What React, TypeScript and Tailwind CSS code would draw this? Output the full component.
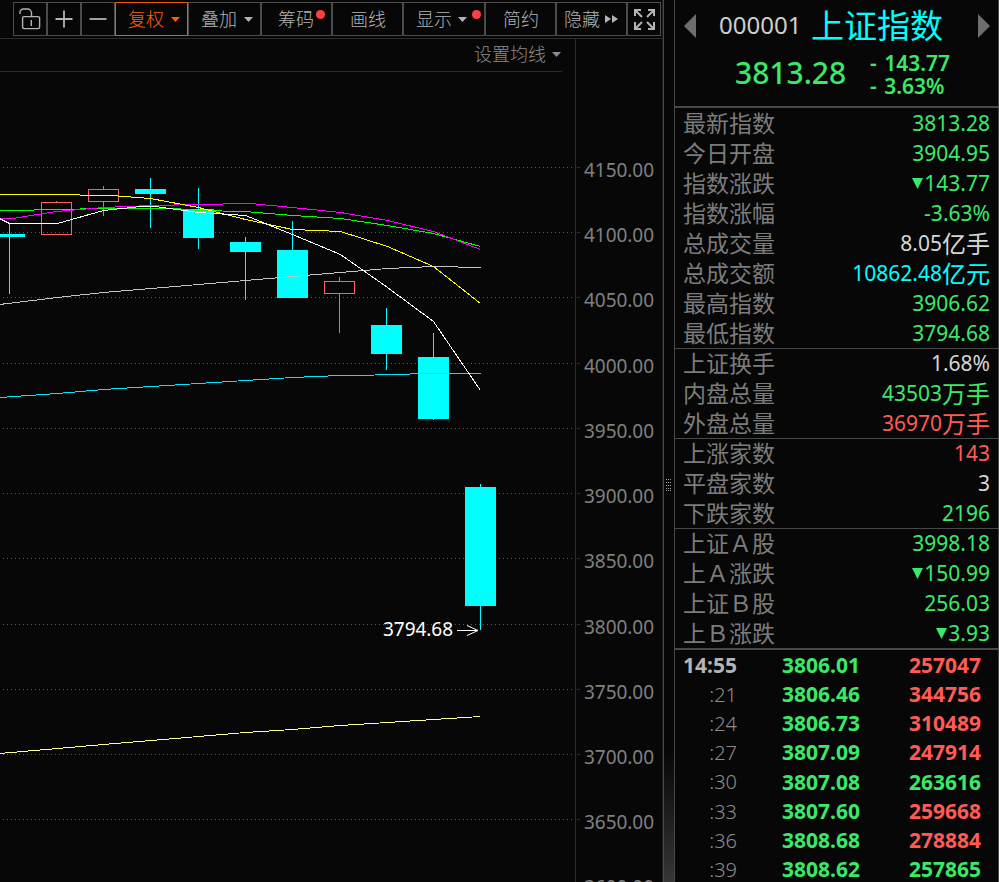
import type { ReactNode } from 'react';

const GREEN = 'text-[#3ce868]';
const RED = 'text-[#ff5b56]';
const CYAN = 'text-[#00ffff]';
const WHITE = 'text-[#d6d6d6]';

type Quote = { label: string; value: string; unit?: string; down?: boolean; color: string };

const groups: Quote[][] = [
  [
    { label: '最新指数', value: '3813.28', color: GREEN },
    { label: '今日开盘', value: '3904.95', color: GREEN },
    { label: '指数涨跌', value: '143.77', down: true, color: GREEN },
    { label: '指数涨幅', value: '-3.63%', color: GREEN },
    { label: '总成交量', value: '8.05', unit: '亿手', color: WHITE },
    { label: '总成交额', value: '10862.48', unit: '亿元', color: CYAN },
    { label: '最高指数', value: '3906.62', color: GREEN },
    { label: '最低指数', value: '3794.68', color: GREEN },
  ],
  [
    { label: '上证换手', value: '1.68%', color: WHITE },
    { label: '内盘总量', value: '43503', unit: '万手', color: GREEN },
    { label: '外盘总量', value: '36970', unit: '万手', color: RED },
  ],
  [
    { label: '上涨家数', value: '143', color: RED },
    { label: '平盘家数', value: '3', color: WHITE },
    { label: '下跌家数', value: '2196', color: GREEN },
  ],
  [
    { label: '上证Ａ股', value: '3998.18', color: GREEN },
    { label: '上Ａ涨跌', value: '150.99', down: true, color: GREEN },
    { label: '上证Ｂ股', value: '256.03', color: GREEN },
    { label: '上Ｂ涨跌', value: '3.93', down: true, color: GREEN },
  ],
];

const ticks = [
  { time: '14:55', price: '3806.01', volume: '257047', color: RED },
  { time: ':21', price: '3806.46', volume: '344756', color: RED },
  { time: ':24', price: '3806.73', volume: '310489', color: RED },
  { time: ':27', price: '3807.09', volume: '247914', color: RED },
  { time: ':30', price: '3807.08', volume: '263616', color: GREEN },
  { time: ':33', price: '3807.60', volume: '259668', color: RED },
  { time: ':36', price: '3808.68', volume: '278884', color: RED },
  { time: ':39', price: '3808.62', volume: '257865', color: GREEN },
];

const grid = [
  { y: 167, label: '4150.00' },
  { y: 232, label: '4100.00' },
  { y: 297, label: '4050.00' },
  { y: 363, label: '4000.00' },
  { y: 428, label: '3950.00' },
  { y: 493, label: '3900.00' },
  { y: 558, label: '3850.00' },
  { y: 624, label: '3800.00' },
  { y: 689, label: '3750.00' },
  { y: 754, label: '3700.00' },
  { y: 819, label: '3650.00' },
  { y: 884, label: '3600.00' },
];

// x is the wick column, the body is 31px wide around it
const candles = [
  { x: 9, high: 223, top: 234, bottom: 237, low: 294 },
  { x: 56, high: 201, top: 202, bottom: 235, low: 235, up: true },
  { x: 103, high: 186, top: 189, bottom: 202, low: 216, up: true },
  { x: 150, high: 178, top: 189, bottom: 194, low: 228 },
  { x: 198, high: 188, top: 209, bottom: 238, low: 249 },
  { x: 245, high: 237, top: 242, bottom: 252, low: 300 },
  { x: 292, high: 221, top: 250, bottom: 298, low: 298 },
  { x: 339, high: 277, top: 281, bottom: 294, low: 333, up: true },
  { x: 386, high: 308, top: 325, bottom: 354, low: 370 },
  { x: 433, high: 333, top: 357, bottom: 419, low: 420 },
  { x: 480, high: 484, top: 487, bottom: 606, low: 630 },
];

const averages = [
  { color: '#c4c4c4', points: '-1,304 57,297 103,292 198,284 292,276 340,272 387,268 433,266 457,266 458,267 480,267' },
  { color: '#00e5f5', points: '-1,397 57,393 103,389 198,383 245,380 292,377 340,375 409,374 410,373 480,373' },
  { color: '#ffff8c', points: '-1,753 57,748 103,744 198,736 245,732 292,729 340,725 387,722 433,719 480,716' },
  { color: '#00ff00', points: '-1,210 33,210 34,209 79,209 80,208 174,208 198,210 245,211 292,215 340,218 387,225 433,233 480,246' },
  { color: '#ff00ff', points: '-1,218 12,218 56,211 103,207 150,205 198,204 222,204 223,203 250,203 292,207 340,212 387,220 433,231 480,249' },
  { color: '#ffff00', points: '-1,194 79,194 80,195 111,195 150,198 198,207 245,219 292,229 340,231 387,246 433,266 480,303' },
  { color: '#ffffff', points: '-1,218 9,223 57,223 103,210 140,206 155,206 198,212 245,215 292,234 340,254 387,287 433,321 480,390' },
];

const Caret = ({ className = '' }: { className?: string }) => (
  <svg width="9" height="5" viewBox="0 0 9 5" className={className}>
    <path d="M0 0h9L4.5 5z" fill="currentColor" />
  </svg>
);

const Dot = ({ className }: { className: string }) => (
  <span className={`absolute top-[7px] size-[9px] rounded-full bg-[#ff4040] ${className}`} />
);

const ToolButton = ({ className, children }: { className: string; children: ReactNode }) => (
  <button className={`relative flex h-[34px] shrink-0 items-center border ${className}`}>{children}</button>
);

const Toolbar = () => (
  <div className="flex h-[38px] pt-[2px] pl-[13px] text-[18px] text-[#b4b4b4]">
    <ToolButton className="w-[34px] border-[#4c4c4c]">
      <svg width="32" height="32" viewBox="0 0 32 32" fill="none" stroke="#b4b4b4" strokeWidth="1.4">
        <rect x="8.6" y="13.6" width="17" height="12" rx="1.5" />
        <path d="M6 11V9.5a3.5 3.5 0 0 1 3.5-3.500h4a4 4 0 0 1 4 4v3.500M17.3 17v6" />
      </svg>
    </ToolButton>
    <ToolButton className="w-[34px] border-[#4c4c4c]">
      <svg width="32" height="32" viewBox="0 0 32 32" stroke="#b4b4b4" strokeWidth="1.8">
        <path d="M7.5 16h17M16 7.5v17" />
      </svg>
    </ToolButton>
    <ToolButton className="w-[34px] border-[#4c4c4c]">
      <svg width="32" height="32" viewBox="0 0 32 32" stroke="#b4b4b4" strokeWidth="1.8">
        <path d="M7.5 16h17" />
      </svg>
    </ToolButton>
    <ToolButton className="w-[73px] border-[#f05a00] pl-[12px] text-[#ff6000]">
      复权<Caret className="ml-[7px]" />
    </ToolButton>
    <ToolButton className="w-[73px] border-[#4c4c4c] pl-[12px]">
      叠加<Caret className="ml-[7px]" />
    </ToolButton>
    <ToolButton className="w-[71px] border-[#4c4c4c] pl-[16px]">
      筹码<Dot className="left-[54px]" />
    </ToolButton>
    <ToolButton className="w-[71px] border-[#4c4c4c] pl-[17px]">画线</ToolButton>
    <ToolButton className="w-[82px] border-[#4c4c4c] pl-[12px]">
      显示<Caret className="ml-[6px]" /><Dot className="left-[68px]" />
    </ToolButton>
    <ToolButton className="w-[71px] border-[#4c4c4c] pl-[17px]">简约</ToolButton>
    <ToolButton className="w-[71px] border-[#4c4c4c] pl-[7px]">
      隐藏
      <svg width="13" height="8" viewBox="0 0 13 8" className="ml-[5px]" fill="#b4b4b4">
        <path d="M0 0l6 4-6 4zM7 0l6 4-6 4z" />
      </svg>
    </ToolButton>
    <ToolButton className="w-[34px] border-[#4c4c4c]">
      <svg width="32" height="32" viewBox="0 0 32 32" fill="none" stroke="#b4b4b4" strokeWidth="2">
        <path d="M7 13V7h6M20 7h6v6M7 19v7h6M20 26h6v-7M7 7l7 7M26 7l-7 7M7 26l7-7M26 26l-7-7" />
      </svg>
    </ToolButton>
  </div>
);

const Chart = () => (
  <svg width="662" height="810" viewBox="0 72 662 810" className="block">
    <g shapeRendering="crispEdges">
      {grid.map((g) => (
        <g key={g.y}>
          <path d={`M3 ${g.y + 0.5}H574`} stroke="#585858" strokeDasharray="1 3" />
          <path d={`M577 ${g.y + 0.5}h3`} stroke="#303030" />
        </g>
      ))}
      <path d="M575.5 72V882" stroke="#2c2c2c" />
      {candles.map((c) => {
        const color = c.up ? '#ff6060' : '#00ffff';
        return (
          <g key={c.x} fill={color}>
            <rect x={c.x} y={c.high} width="1" height={c.top - c.high} />
            <rect x={c.x} y={c.bottom} width="1" height={c.low - c.bottom} />
            {c.up ? (
              <rect x={c.x - 14.5} y={c.top + 0.5} width="30" height={c.bottom - c.top - 1} fill="none" stroke={color} />
            ) : (
              <rect x={c.x - 15} y={c.top} width="31" height={c.bottom - c.top} />
            )}
          </g>
        );
      })}
      {averages.map((a) => (
        <polyline key={a.color} points={a.points} transform="translate(0.5 0.5)" fill="none" stroke={a.color} />
      ))}
    </g>
    <g fill="#808080" fontSize="19" className="font-normal">
      {grid.map((g) => (
        <text key={g.y} x="584" y={g.y + 10} textLength="70">{g.label}</text>
      ))}
    </g>
    <text x="383" y="636" fontSize="19" fill="#fff" textLength="70" className="font-normal">3794.68</text>
    <path d="M457 630.5H478M467 625.5L478 630.5L467 635.5" fill="none" stroke="#fff" />
  </svg>
);

const Splitter = () => (
  <div className="w-[12px] shrink-0 border-x border-[#484848] bg-linear-to-b from-transparent from-[85%] to-[#363636] pt-[479px] pl-[2px]">
    <svg width="6" height="12" viewBox="0 0 6 12" shapeRendering="crispEdges">
      <path d="M0 .5h6M0 3.5h6M0 6.5h6M0 9.5h6M0 11.5h6" stroke="#a0a0a0" strokeDasharray="1 1" />
    </svg>
  </div>
);

const Header = () => (
  <div className="h-[106px] shrink-0">
    <div className="flex h-[50px] items-center pt-[2px] pr-[8px] pl-[9px]">
      <svg width="12" height="24" viewBox="0 0 12 24"><path d="M12 0v24L0 12z" fill="#6e6e6e" /></svg>
      <span className="ml-[23px] w-[92px] pb-[2px] text-[24px] text-[#cfcfcf]">000001</span>
      <span className="text-[33px] text-[#00ffff]">上证指数</span>
      <svg width="12" height="24" viewBox="0 0 12 24" className="ml-auto"><path d="M0 0v24l12-12z" fill="#6e6e6e" /></svg>
    </div>
    <div className={`flex items-start pl-[60px] ${GREEN}`}>
      <span className="w-[135px] text-[30px] leading-[46px] font-medium">3813.28</span>
      <div className="pt-[2px] text-[21px] leading-[23px] font-semibold [word-spacing:2px]">
        <div>- 143.77</div>
        <div>- 3.63%</div>
      </div>
    </div>
  </div>
);

const QuoteRow = ({ quote }: { quote: Quote }) => (
  <div className="flex h-[30px] items-center justify-between pr-[8px] pl-[8px]">
    <span className="pt-px text-[23px] leading-[29px] text-[#7c7c7c]">{quote.label}</span>
    <span className={`flex items-center text-[21px] leading-[30px] ${quote.color}`}>
      {quote.down && (
        <svg width="11" height="11" viewBox="0 0 11 11" className="mr-px">
          <path d="M0 0h11L5.5 11z" fill="currentColor" />
        </svg>
      )}
      <span className="pb-[1px]">{quote.value}</span>
      {quote.unit && <span className="pt-[2px] text-[24px] leading-[28px]">{quote.unit}</span>}
    </span>
  </div>
);

const SidePanel = () => (
  <div className="flex h-full min-w-0 grow flex-col border-r border-[#484848] font-normal">
    <Header />
    <div className="shrink-0 border-t-2 border-[#484848]">
      {groups.map((group, i) => (
        <div key={group[0].label} className="relative">
          {i > 0 && <div className="absolute inset-x-0 top-0 h-px bg-[#484848]" />}
          {group.map((q) => <QuoteRow key={q.label} quote={q} />)}
        </div>
      ))}
    </div>
    <div className="shrink-0 border-t-2 border-[#484848] pt-[1px] text-[21px] font-bold">
      {ticks.map((t, i) => (
        <div key={t.time} className="flex h-[29.2px] items-center pr-[17px] pl-[8px]">
          <span className={`w-[54px] text-right ${i === 0 ? 'text-[#b4b4b4]' : 'text-[20px] font-light text-[#8c8c8c]'}`}>{t.time}</span>
          <span className={`ml-[45px] ${GREEN}`}>{t.price}</span>
          <span className={`ml-auto ${t.color}`}>{t.volume}</span>
        </div>
      ))}
    </div>
  </div>
);

export default function App() {
  return (
    <div className="flex h-[882px] w-[999px] overflow-hidden bg-[#070707] font-['Noto_Sans','Noto_Sans_CJK_SC',sans-serif] font-light">
      <div className="w-[662px] shrink-0">
        <Toolbar />
        <div className="flex h-[34px] border-t border-[#2c2c2c]">
          <div className="flex w-[562px] items-center justify-end border-b border-[#2c2c2c] pr-[1px] pb-[2px] text-[18px] text-[#8c8c8c]">
            设置均线<Caret className="ml-[6px]" />
          </div>
          <div className="ml-[13px] border-l border-[#2c2c2c]" />
        </div>
        <Chart />
      </div>
      <div className="w-px shrink-0 bg-[#202020]" />
      <Splitter />
      <SidePanel />
    </div>
  );
}
